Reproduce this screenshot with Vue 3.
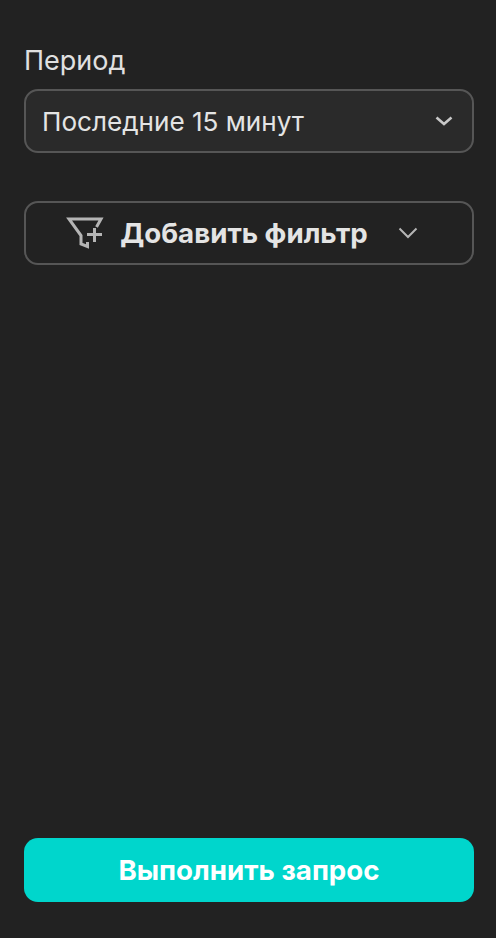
<script setup>
import { ref } from "vue"

const period = ref("Последние 15 минут")
</script>

<template>
  <div class="panel">
    <div class="field">
      <label class="field-label">Период</label>
      <button class="select">
        <span class="select-value">{{ period }}</span>
        <svg class="select-arrow" width="18" height="10" viewBox="0 0 18 10" fill="none">
          <path d="M1.500 1.500L9 8l7.500-6.500" stroke="#c8c8c8" stroke-width="2.600" />
        </svg>
      </button>
    </div>

    <button class="add-filter">
      <svg class="filter-icon" width="38" height="34" viewBox="0 0 38 34" fill="none">
        <path d="M30.500 11l4.500-8H3L15 19.500V28l6.500 2.500V26" stroke="#b5b5b5" stroke-width="3" />
        <path d="M21 18.500h15M28.500 12v14" stroke="#b5b5b5" stroke-width="3" />
      </svg>
      <span>Добавить фильтр</span>
      <svg class="filter-arrow" width="20" height="12" viewBox="0 0 20 12" fill="none">
        <path d="M1.500 1.500L10 10l8.500-8.500" stroke="#b5b5b5" stroke-width="2" />
      </svg>
    </button>

    <button class="run-btn">Выполнить запрос</button>
  </div>
</template>

<style scoped>
  .panel {
    box-sizing: border-box;
    height: 938px;
    padding: 45px 22px 36px 24px;
    display: flex;
    flex-direction: column;
    background: #222222;
    font-family: Inter, "Noto Sans", sans-serif;
  }

  .field {
    display: flex;
    flex-direction: column;
    gap: 12px;
  }

  .field-label {
    font-size: 27px;
    line-height: 32px;
    color: #e0e0e0;
  }

  .select {
    display: flex;
    justify-content: space-between;
    align-items: center;
    height: 64px;
    padding: 0 19px 0 16px;
    border: 2px solid #565656;
    border-radius: 14px;
    background: #2a2a2a;
    font: inherit;
    font-size: 26.100px;
    color: #e4e4e4;
  }

  .add-filter {
    display: flex;
    justify-content: center;
    align-items: center;
    height: 64px;
    margin-top: 48px;
    padding: 0 14px 0 0;
    border: 2px solid #565656;
    border-radius: 14px;
    background: transparent;
    font: inherit;
    font-size: 27.700px;
    font-weight: 700;
    color: #e4e4e4;
  }

  .filter-icon {
    margin-right: 16px;
  }

  .filter-arrow {
    margin-left: 30px;
  }

  .run-btn {
    height: 64px;
    margin-top: auto;
    border: none;
    border-radius: 14px;
    background: #00d6cc;
    font: inherit;
    font-size: 27.700px;
    font-weight: 700;
    color: #ffffff;
  }
</style>
